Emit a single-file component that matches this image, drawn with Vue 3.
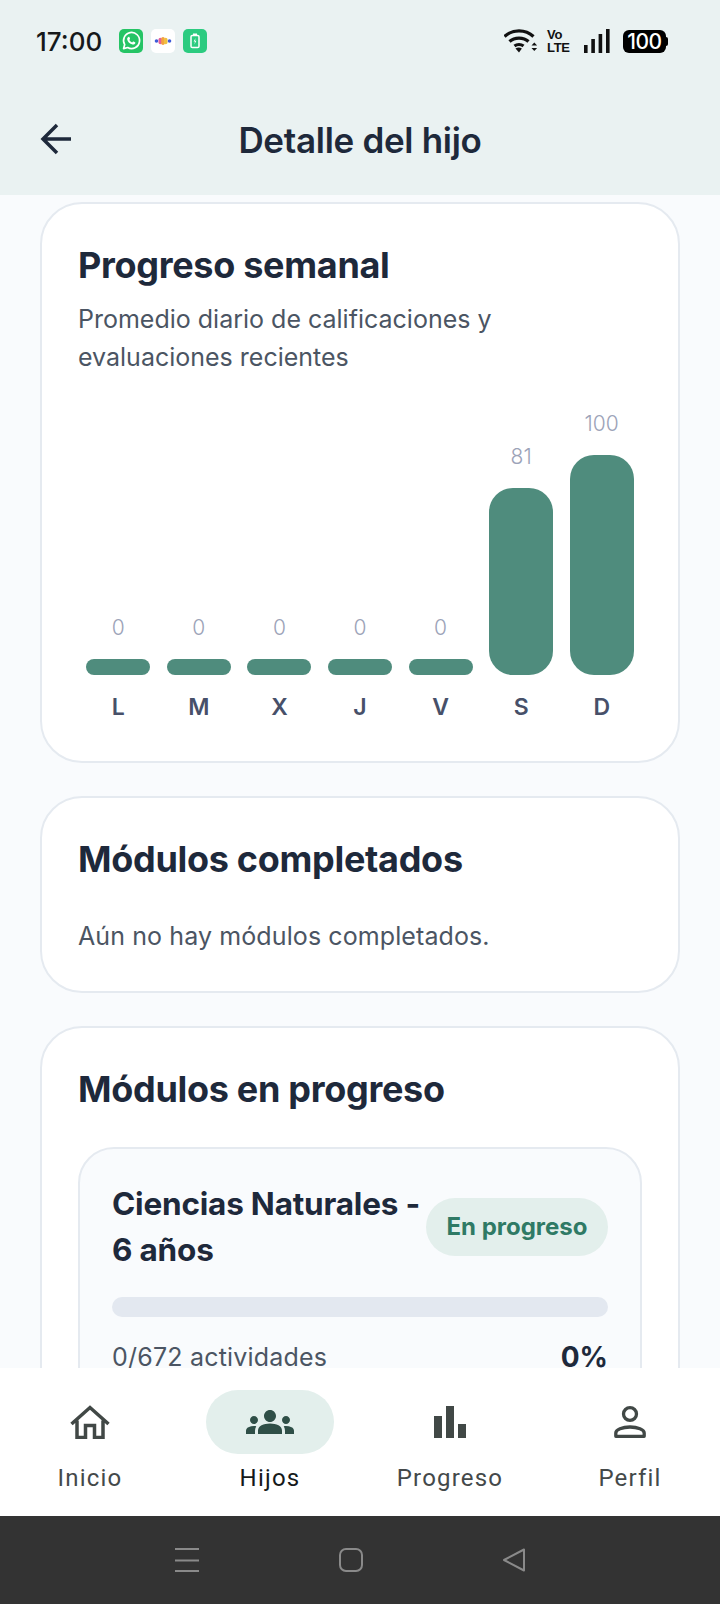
<script setup>
// week chart values, height is in px
const days = [
  { day: 'L', value: 0, height: 16 },
  { day: 'M', value: 0, height: 16 },
  { day: 'X', value: 0, height: 16 },
  { day: 'J', value: 0, height: 16 },
  { day: 'V', value: 0, height: 16 },
  { day: 'S', value: 81, height: 187 },
  { day: 'D', value: 100, height: 220 },
]
</script>

<template>
  <div class="screen">
    <header class="top">
      <div class="status">
        <span class="time">17:00</span>
        <div class="apps">
          <svg class="tile" viewBox="0 0 24 24">
            <rect width="24" height="24" rx="5" fill="#25c465" />
            <path d="M4.600 19.600l1.100-4a8 8 0 1 1 3 2.900z" fill="none" stroke="#fff" stroke-width="1.700" stroke-linejoin="round" />
            <path d="M9.300 8c.4-.4.9-.4 1.100.1l.6 1.400c.1.3 0 .6-.2.8l-.5.6c.7 1.200 1.600 2 2.800 2.600l.7-.8c.2-.2.5-.3.8-.2l1.400.7c.4.2.5.6.3 1-.5 1.100-1.600 1.600-2.800 1.300-2.800-.8-4.700-2.700-5.300-5.100-.2-1 .3-1.800 1.100-2.400z" fill="#fff" />
          </svg>
          <svg class="tile" viewBox="0 0 24 24">
            <rect width="24" height="24" rx="5" fill="#fff" />
            <circle cx="5.500" cy="12" r="1.800" fill="#3f5bd8" />
            <rect x="7.500" y="8.800" width="3.600" height="6.400" rx="1.800" fill="#e4609a" />
            <rect x="10.200" y="8" width="3.600" height="8" rx="1.800" fill="#f3a23f" />
            <rect x="12.900" y="8.800" width="3.600" height="6.400" rx="1.800" fill="#f0c040" />
            <circle cx="18.500" cy="12" r="1.800" fill="#3f5bd8" />
          </svg>
          <svg class="tile" viewBox="0 0 24 24">
            <rect width="24" height="24" rx="5" fill="#2ccb80" />
            <rect x="8" y="6.500" width="8" height="12" rx="1.300" fill="none" stroke="#fff" stroke-width="1.500" />
            <rect x="10" y="4.500" width="4" height="2" fill="#fff" />
            <path d="M12.600 9l-2 3.500h1.400l-.6 3 2-3.700H12z" fill="#fff" />
          </svg>
        </div>
        <div class="spacer"></div>
        <svg class="wifi" viewBox="0 0 34 24">
          <path d="M1.500 8.500C9.500 1 22.500 1 30.500 8.500M6.500 13.500c5-4.500 14-4.500 19 0M11.500 18c2.500-2 6.500-2 9 0" fill="none" stroke="#111" stroke-width="3.200" transform="translate(-1 -1)" />
          <path d="M11.500 19.500c1.800-1.300 4.500-1.300 6.400 0L15 23.500z" fill="#111" />
          <path d="M27.500 16.500l2.800-3 2.800 3zM27.500 19l2.800 3 2.800-3z" fill="#111" />
        </svg>
        <div class="volte"><span>Vo</span><span>LTE</span></div>
        <svg class="signal" viewBox="0 0 26 24">
          <rect x="0" y="16" width="3.600" height="8" fill="#111" />
          <rect x="7.300" y="10" width="3.600" height="14" fill="#111" />
          <rect x="14.600" y="5" width="3.600" height="19" fill="#111" />
          <rect x="22" y="0" width="3.600" height="24" fill="#111" />
        </svg>
        <div class="battery">100</div>
      </div>
      <div class="titlebar">
        <svg class="back" viewBox="0 0 32 32">
          <path d="M31 16H3M17 2L3 16l14 14" fill="none" stroke="#1e293b" stroke-width="3.500" />
        </svg>
        <h1>Detalle del hijo</h1>
      </div>
    </header>

    <main class="content">
      <section class="card">
        <h2>Progreso semanal</h2>
        <p class="sub">Promedio diario de calificaciones y evaluaciones recientes</p>
        <div class="chart">
          <div class="col" v-for="d in days" :key="d.day">
            <span class="val">{{ d.value }}</span>
            <div class="bar" :style="{ height: d.height + 'px' }"></div>
            <span class="day">{{ d.day }}</span>
          </div>
        </div>
      </section>

      <section class="card">
        <h2>Módulos completados</h2>
        <p class="empty">Aún no hay módulos completados.</p>
      </section>

      <section class="card">
        <h2>Módulos en progreso</h2>
        <div class="module">
          <div class="module-head">
            <h3>Ciencias Naturales - 6 años</h3>
            <span class="badge">En progreso</span>
          </div>
          <div class="track"></div>
          <div class="module-foot">
            <span>0/672 actividades</span>
            <b>0%</b>
          </div>
        </div>
      </section>
    </main>

    <nav class="tabs">
      <div class="tab">
        <div class="icon">
          <svg width="40" height="34" viewBox="0 0 40 34">
            <path d="M1.500 19L20 2.500 38.500 19M7 15.500V32.500H15.500V20.500H24.500V32.500H33V15.500" fill="none" stroke="#414846" stroke-width="3.500" />
          </svg>
        </div>
        <span>Inicio</span>
      </div>
      <div class="tab active">
        <div class="icon">
          <svg width="48" height="48" viewBox="0 0 24 24">
            <path d="M12 12.750c1.630 0 3.070.390 4.240.900 1.080.480 1.760 1.560 1.760 2.730V18H6v-1.610c0-1.180.680-2.260 1.760-2.730 1.170-.520 2.610-.910 4.240-.910zM4 13c1.100 0 2-.900 2-2s-.900-2-2-2-2 .900-2 2 .900 2 2 2zm1.130 1.100C4.760 14.040 4.390 14 4 14c-.990 0-1.930.210-2.780.580C.480 14.900 0 15.620 0 16.430V18h4.500v-1.610c0-.830.230-1.610.630-2.290zM20 13c1.100 0 2-.900 2-2s-.900-2-2-2-2 .900-2 2 .900 2 2 2zm4 3.430c0-.810-.480-1.530-1.220-1.850C21.930 14.210 20.990 14 20 14c-.390 0-.760.040-1.130.100.400.680.630 1.460.630 2.290V18H24v-1.570zM12 6c1.660 0 3 1.340 3 3s-1.340 3-3 3-3-1.340-3-3 1.340-3 3-3z" fill="#2f4f47" />
          </svg>
        </div>
        <span>Hijos</span>
      </div>
      <div class="tab">
        <div class="icon">
          <svg width="32" height="32" viewBox="0 0 32 32">
            <rect x="0" y="10" width="8" height="22" fill="#414846" />
            <rect x="12" y="0" width="8" height="32" fill="#414846" />
            <rect x="24" y="18" width="8" height="14" fill="#414846" />
          </svg>
        </div>
        <span>Progreso</span>
      </div>
      <div class="tab">
        <div class="icon">
          <svg width="32" height="32" viewBox="0 0 32 32">
            <ellipse cx="16" cy="8" rx="6.500" ry="6.300" fill="none" stroke="#414846" stroke-width="3.300" />
            <path d="M1.800 30.300V27c0-3.300 6.500-6 14.200-6s14.200 2.700 14.200 6v3.300z" fill="none" stroke="#414846" stroke-width="3.300" stroke-linejoin="round" />
          </svg>
        </div>
        <span>Perfil</span>
      </div>
    </nav>

    <footer class="sysbar">
      <svg width="24" height="24" viewBox="0 0 24 24">
        <path d="M0 1h24M0 12.500h24M0 23h24" stroke="#8a8a8a" stroke-width="2" />
      </svg>
      <svg width="24" height="24" viewBox="0 0 24 24">
        <rect x="1" y="1" width="22" height="22" rx="6" fill="none" stroke="#8a8a8a" stroke-width="2" />
      </svg>
      <svg width="24" height="24" viewBox="0 0 24 24">
        <path d="M22 1.500V22.500L2 12z" fill="none" stroke="#8a8a8a" stroke-width="2" stroke-linejoin="round" />
      </svg>
    </footer>
  </div>
</template>

<style>
html, body {
  margin: 0;
  background: #f9fbfd;
}
</style>

<style scoped>
.screen {
  width: 720px;
  height: 1604px;
  display: flex;
  flex-direction: column;
  overflow: hidden;
  font-family: Inter, "Liberation Sans", sans-serif;
  color: #1e293b;
  background: #f9fbfd;
}
.top {
  height: 195px;
  flex: none;
  background: #eaf2f2;
}
.status {
  height: 82px;
  display: flex;
  align-items: center;
  padding: 0 54px 0 36px;
  box-sizing: border-box;
}
.time {
  font-size: 26px;
  font-weight: 500;
  color: #16191b;
  width: 83px;
}
.apps {
  display: flex;
  gap: 8px;
}
.tile {
  width: 24px;
  height: 24px;
}
.spacer {
  flex: 1;
}
.wifi {
  width: 34px;
  height: 24px;
}
.volte {
  margin-left: 9px;
  width: 23px;
  display: flex;
  flex-direction: column;
  font-family: "Liberation Sans", sans-serif;
  font-size: 13px;
  line-height: 13px;
  font-weight: 700;
  letter-spacing: -0.3px;
  color: #111;
}
.signal {
  margin-left: 14px;
  width: 26px;
  height: 24px;
}
.battery {
  position: relative;
  margin-left: 13px;
  width: 43px;
  height: 23px;
  border-radius: 6px;
  background: #000;
  color: #fff;
  font-size: 21px;
  line-height: 23px;
  font-weight: 500;
  letter-spacing: -0.5px;
  text-align: center;
}
.battery::after {
  content: "";
  position: absolute;
  right: -2px;
  top: 7px;
  width: 2px;
  height: 9px;
  border-radius: 0 2px 2px 0;
  background: #000;
}
.titlebar {
  position: relative;
  height: 113px;
  display: flex;
  align-items: center;
  justify-content: center;
}
.back {
  position: absolute;
  left: 40px;
  top: 41px;
  width: 32px;
  height: 32px;
}
h1 {
  margin: 2px 0 0;
  font-size: 35px;
  font-weight: 600;
  letter-spacing: -0.3px;
}
.content {
  flex: 1;
  min-height: 0;
  overflow: hidden;
  padding: 7px 40px 0;
  display: flex;
  flex-direction: column;
  gap: 33px;
}
.card {
  flex: none;
  background: #fff;
  border: 2px solid #e5eaf0;
  border-radius: 42px;
  padding: 37px 36px 36px;
}
h2 {
  margin: 0;
  font-size: 36px;
  line-height: 48px;
  font-weight: 700;
  letter-spacing: -0.3px;
}
.sub {
  margin: 11px 0 0;
  font-size: 25px;
  line-height: 38px;
  color: #4b5563;
}
.chart {
  margin: 34px 0 3px;
  display: grid;
  grid-template-columns: repeat(7, 1fr);
  align-items: end;
}
.col {
  display: flex;
  flex-direction: column;
  align-items: center;
}
.val {
  font-size: 21px;
  font-weight: 300;
  line-height: 28px;
  color: #9ca3b8;
  margin-bottom: 17px;
}
.bar {
  width: 64px;
  border-radius: 24px;
  background: #4f8c7d;
}
.day {
  margin-top: 17px;
  font-size: 23px;
  line-height: 30px;
  font-weight: 600;
  color: #475069;
}
.empty {
  margin: 34px 0 0;
  font-size: 25px;
  line-height: 38px;
  letter-spacing: 0.1px;
  color: #4b5563;
}
.module {
  margin-top: 34px;
  background: #f9fbfd;
  border: 2px solid #e5eaf0;
  border-radius: 36px;
  padding: 32px;
}
.module-head {
  display: flex;
  align-items: center;
  gap: 2px;
}
h3 {
  margin: 0;
  flex: 1;
  font-size: 31.500px;
  line-height: 46px;
  font-weight: 700;
  letter-spacing: -0.2px;
}
.badge {
  flex: none;
  width: 182px;
  height: 58px;
  line-height: 58px;
  text-align: center;
  border-radius: 29px;
  background: #e3efec;
  color: #2f7a65;
  font-size: 24px;
  font-weight: 700;
}
.track {
  margin-top: 24px;
  height: 20px;
  border-radius: 10px;
  background: #e3e8f0;
}
.module-foot {
  margin-top: 22px;
  display: flex;
  justify-content: space-between;
  align-items: center;
  font-size: 25px;
  line-height: 36px;
  letter-spacing: 0.2px;
  color: #4b5563;
}
.module-foot b {
  font-size: 28px;
  letter-spacing: 0;
  color: #1e293b;
}
.tabs {
  flex: none;
  height: 148px;
  background: #fff;
  display: grid;
  grid-template-columns: repeat(4, 1fr);
  font-family: Roboto, sans-serif;
}
.tab {
  display: flex;
  flex-direction: column;
  align-items: center;
  padding-top: 22px;
  font-size: 24px;
  line-height: 34px;
  letter-spacing: 1.200px;
  color: #44494a;
}
.tab.active {
  color: #15191a;
}
.icon {
  width: 128px;
  height: 64px;
  margin-bottom: 7px;
  border-radius: 32px;
  display: flex;
  align-items: center;
  justify-content: center;
}
.active .icon {
  background: #e3efec;
}
.sysbar {
  flex: none;
  height: 88px;
  background: #333;
  display: flex;
  align-items: center;
  padding: 0 194px 0 175px;
  justify-content: space-between;
}
</style>
